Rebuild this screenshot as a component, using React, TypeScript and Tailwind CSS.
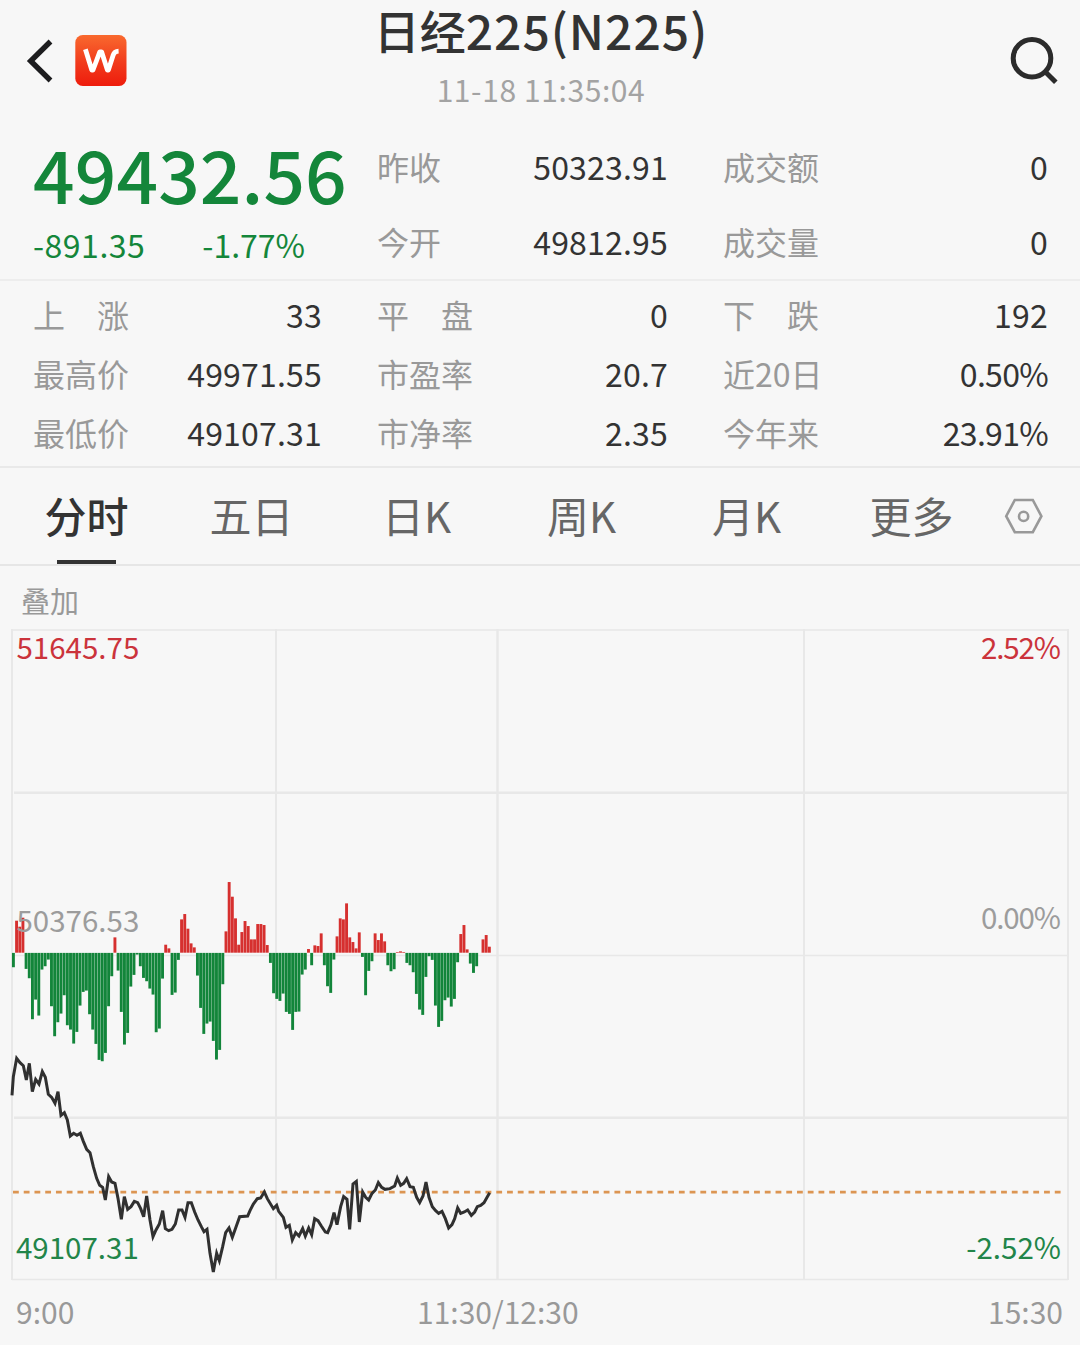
import { useState } from "react";
import clsx from "clsx";

type Stat = { label: string; value: string };

const summary: Stat[][] = [
  [
    { label: "昨收", value: "50323.91" },
    { label: "今开", value: "49812.95" },
  ],
  [
    { label: "成交额", value: "0" },
    { label: "成交量", value: "0" },
  ],
];

const details: Stat[] = [
  { label: "上　涨", value: "33" },
  { label: "平　盘", value: "0" },
  { label: "下　跌", value: "192" },
  { label: "最高价", value: "49971.55" },
  { label: "市盈率", value: "20.7" },
  { label: "近20日", value: "0.50%" },
  { label: "最低价", value: "49107.31" },
  { label: "市净率", value: "2.35" },
  { label: "今年来", value: "23.91%" },
];

const tabs = ["分时", "五日", "日K", "周K", "月K", "更多"];

// one value per minute, 9:00 - 11:30, in thirds of a pixel
const bars = [
  -43, 96, 78, 105, -48, -76, -199, -140, -188, -50, -40, -20, -160, -250, -208,
  -182, -127, -217, -230, -272, -237, -158, -117, -113, -184, -230, -273, -321, -325, -300,
  -160, -70, 46, -53, -177, -275, -240, -101, -66, -5, -40, -75, -85, -107, -125,
  -238, -227, -77, 24, 13, -126, -119, -21, 100, 116, 72, 28, 16, -68, -165,
  -243, -212, -206, -264, -320, -291, -94, 64, 212, 168, 103, 24, 62, 95, 80,
  40, 40, 86, 86, 83, 23, -30, -121, -138, -144, -122, -177, -183, -231, -177,
  -176, -65, -50, 11, -37, 22, 20, 58, -37, -100, -120, -20, 49, 103, 100,
  148, 46, 32, 13, 61, -12, -127, -54, -25, 58, 38, 58, 34, -37, -55,
  -49, 2, 4, 2, -30, -37, -58, -123, -170, -186, -72, -10, -21, -158, -222,
  -204, -142, -134, -161, -138, -28, 56, 83, 10, -32, -60, -40, 0, 40, 53,
  18,
];

const line =
  "36,166 40,110 50,55 60,68 70,77 79,120 88,70 97,155 107,118 117,132 127,95 136,112 145,163 155,172 165,190 " +
  "174,155 183,226 193,218 202,240 211,288 221,280 231,286 241,280 250,304 260,328 270,338 280,380 290,415 299,436 " +
  "308,442 316,480 326,410 335,426 345,430 354,475 364,538 373,470 383,508 393,500 403,484 413,488 422,506 431,530 " +
  "440,468 450,540 459,590 468,570 478,552 488,512 496,566 506,572 516,568 526,552 536,510 546,510 555,532 564,488 " +
  "574,488 584,516 594,540 604,560 612,575 621,568 630,640 640,696 650,640 658,662 668,620 677,578 687,564 697,592 " +
  "707,564 719,530 743,528 750,512 760,492 772,476 782,474 793,456 802,476 820,506 830,496 836,514 850,532 858,562 " +
  "868,556 877,600 887,578 897,588 908,566 916,588 926,564 935,584 944,536 954,542 964,558 976,576 983,578 993,554 " +
  "1002,518 1011,554 1022,500 1031,470 1041,478 1049,568 1059,432 1069,424 1078,546 1088,456 1097,472 1106,480 " +
  "1116,460 1126,450 1135,428 1145,442 1155,448 1170,446 1184,438 1192,414 1202,436 1211,430 1220,416 1230,440 " +
  "1240,442 1250,472 1259,488 1269,468 1278,426 1287,472 1297,500 1307,512 1316,520 1326,514 1336,536 1346,564 " +
  "1356,554 1364,536 1373,504 1382,520 1393,516 1403,510 1414,526 1424,516 1432,500 1442,496 1452,488 1460,474 1469,458";

function StatRow({ label, value }: Stat) {
  return (
    <div className="flex items-center justify-between">
      <span className="text-[#999999]">{label}</span>
      <span className={clsx("text-[#333333]", value.endsWith("%") ? "tracking-[-0.7px]" : "tracking-[0.2px]")}>
        {value}
      </span>
    </div>
  );
}

function Header() {
  return (
    <header className="flex h-[128px] justify-between pl-[26px] pr-6">
      <div className="flex w-[120px] gap-[21px] pt-[35px]">
        <svg width="28" height="52" viewBox="0 0 28 52" fill="none">
          <path d="M24.5 6.5 L4.7 26 L24.5 45.5" stroke="#1d1d1f" strokeWidth="5.4" />
        </svg>
        <svg width="52" height="52" viewBox="0 0 52 52" fill="none">
          <defs>
            <linearGradient id="logo" x1="0" y1="0" x2="0" y2="1">
              <stop offset="0" stopColor="#f9692e" />
              <stop offset="0.55" stopColor="#f13a1c" />
              <stop offset="1" stopColor="#ee1c0c" />
            </linearGradient>
          </defs>
          <rect x="0.3" y="0" width="51.2" height="51" rx="7.5" fill="url(#logo)" />
          <path
            d="M10.4 14.2 L16.8 35 H18 L24.8 16.8 H26.6 L32.4 35 H33.4 L38.2 20 Q39.4 16.4 43.6 16.2"
            stroke="#ffffff"
            strokeWidth="4.8"
            strokeLinejoin="round"
          />
        </svg>
      </div>
      <div className="flex flex-col items-center">
        <h1 className="flex h-[58px] items-center text-[46px] font-medium leading-[54px] text-[#333333]">
          日经<span className="text-[48px] tracking-[1px]">225(N225)</span>
        </h1>
        <p className="text-[30px] leading-[62px] tracking-[0.6px] text-[#a3a3a3]">11-18 11:35:04</p>
      </div>
      <div className="flex w-[120px] justify-end pt-[34px]">
        <svg width="48" height="52" viewBox="0 0 48 52" fill="none" stroke="#2b2b2b" strokeWidth="5" className="overflow-visible">
          <circle cx="24" cy="24.3" r="18.8" />
          <path d="M37.5 38 L47.8 48.2" />
        </svg>
      </div>
    </header>
  );
}

function Chart() {
  return (
    <svg
      width="1080"
      height="664"
      viewBox="0 625 1080 664"
      className="block text-[29.5px]"
    >
      <g stroke="#e8e8e8" strokeWidth="2">
        <path d="M12 629 V1280 M276 629 V1280 M804 629 V1280 M1068 629 V1280" />
        <path d="M497.5 629 V1280" strokeWidth="2.5" />
        <path d="M12 630 H1068 M12 955.5 H1068 M12 1279.5 H1068" strokeWidth="1.6" />
        <path d="M14 792.7 H1068 M14 1117.7 H1068" strokeWidth="2.4" />
      </g>

      {bars.map((v, i) => (
        <rect
          key={i}
          x={11.95 + i * 3.173}
          y={v > 0 ? 952.7 - v / 3 : 952.9}
          width={2.9}
          height={Math.abs(v) / 3}
          fill={v > 0 ? "#d6302f" : "#12853a"}
        />
      ))}

      <path d="M13 1192.2 H1062" stroke="#dc9552" strokeWidth="2.8" strokeDasharray="5.8 4.94" />
      <g transform="translate(0 1040) scale(0.33333)">
        <polyline points={line} fill="none" stroke="#303030" strokeWidth="9" strokeLinejoin="miter" />
      </g>

      <text x="16.5" y="659.3" fill="#cb333b">51645.75</text>
      <text x="1061" y="659.3" fill="#cb333b" textAnchor="end" textLength="80">2.52%</text>
      <text x="16.5" y="932" fill="#9c9c9c">50376.53</text>
      <text x="1061" y="928.5" fill="#9c9c9c" textAnchor="end" textLength="80">0.00%</text>
      <text x="16" y="1258.7" fill="#228549">49107.31</text>
      <text x="1061" y="1258.7" fill="#228549" textAnchor="end">-2.52%</text>
    </svg>
  );
}

export default function App() {
  const [active, setActive] = useState(0);

  return (
    <div className="h-[1345px] w-[1080px] overflow-hidden bg-[#f7f7f7] font-['Noto_Sans_CJK_SC',sans-serif]">
      <Header />

      {/* Price summary */}
      <section className="grid h-[153px] grid-cols-[289px_291px_325px] gap-[55px] border-b-2 border-[#ededed] pl-[33px] text-[32px] leading-[40px]">
        <div className="flex flex-col text-[#14863a]">
          <div className="whitespace-nowrap pt-[7px] text-[73px] font-medium leading-[74px] tracking-[0.1px]">49432.56</div>
          <div className="flex gap-[57px] pt-[15px] tracking-[0.5px]">
            <span>-891.35</span>
            <span className="tracking-[0px]">-1.77%</span>
          </div>
        </div>
        {summary.map((column, i) => (
          <div key={i} className="grid grid-rows-[75px_75px]">
            {column.map((stat) => (
              <StatRow key={stat.label} {...stat} />
            ))}
          </div>
        ))}
      </section>

      <section className="grid h-[187px] grid-cols-[289px_291px_325px] grid-rows-[59px_59px_59px] gap-x-[55px] border-b-2 border-[#e9e9e9] pl-[33px] pt-[3px] text-[32px] leading-[40px]">
        {details.map((stat) => (
          <StatRow key={stat.label} {...stat} />
        ))}
      </section>

      {/* Tabs */}
      <nav className="flex h-[98px] items-stretch border-b-2 border-[#e6e6e6] pl-1">
        {tabs.map((tab, i) => (
          <button
            key={tab}
            onClick={() => setActive(i)}
            className={clsx(
              "flex w-[165px] flex-col items-center justify-between pt-[17px] text-[42px] leading-[60px]",
              i === active ? "font-medium text-[#333333]" : "text-[#666666]"
            )}
          >
            {tab}
            {i === active && <span className="h-1 w-[59px] bg-[#333333]" />}
          </button>
        ))}
        <div className="flex items-center pl-[10px]">
          <svg width="40" height="36" viewBox="0 0 40 36" fill="none" stroke="#999999" strokeWidth="2.6">
            <path d="M10.8 2 H28.8 L37.4 18.2 L28.8 34.2 H10.8 L2.2 18.2 Z" />
            <circle cx="19.6" cy="18.4" r="4.6" />
          </svg>
        </div>
      </nav>

      <div className="h-[59px] pl-[21px] text-[29px] leading-[68px] text-[#999999]">叠加</div>
      <Chart />

      {/* The lunch break label sits on the 11:30 grid line */}
      <div className="grid grid-cols-[401px_auto_1fr] pl-4 pr-[17px] text-[30px] leading-[44px] text-[#999999]">
        <span>9:00</span>
        <span>11:30/12:30</span>
        <span className="text-right">15:30</span>
      </div>
    </div>
  );
}
